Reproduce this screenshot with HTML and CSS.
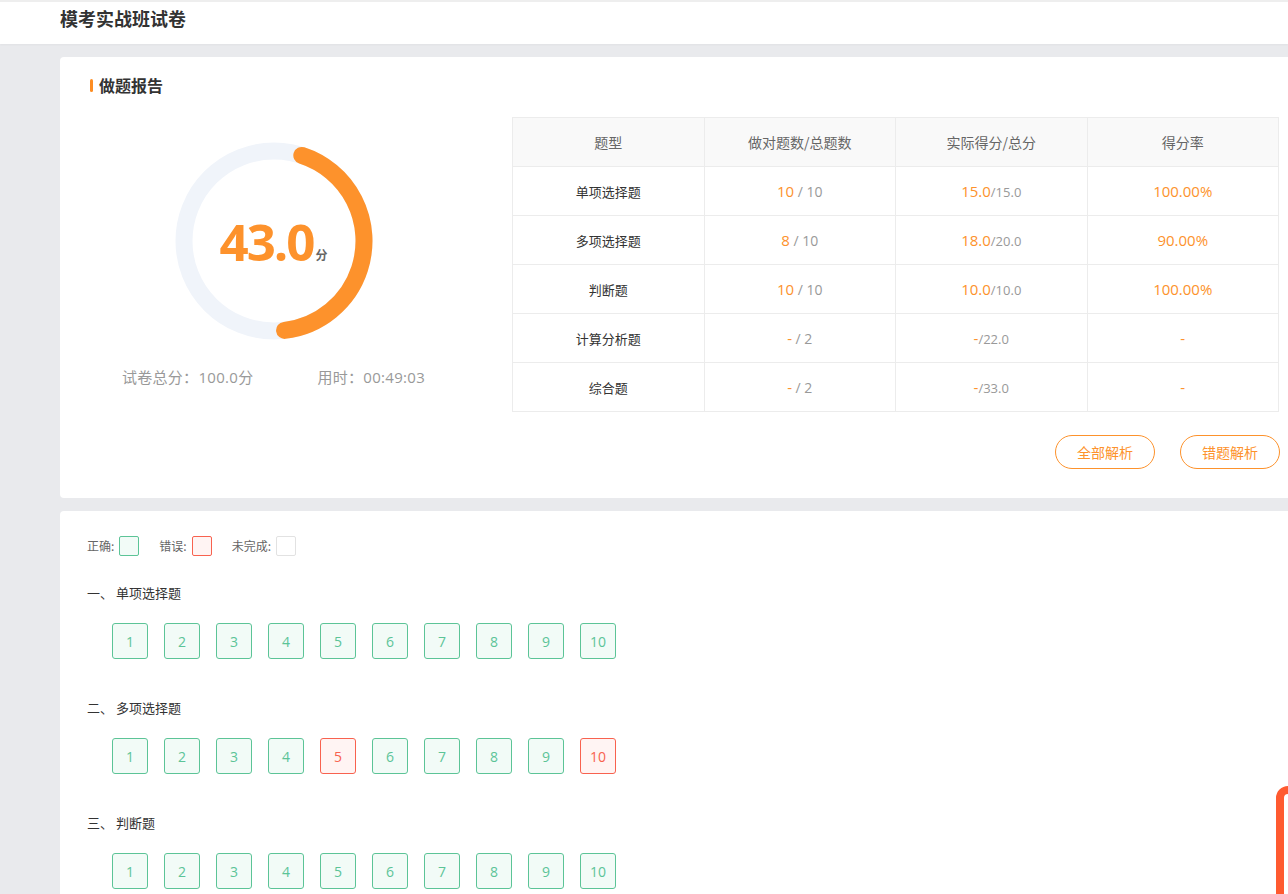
FILE: index.html
```html
<!DOCTYPE html>
<html lang="zh">
<head>
<meta charset="utf-8">
<title>模考实战班试卷</title>
<link rel="stylesheet" href="styles.css">
</head>
<body>
<header class="topbar">
  <h1 class="page-title">模考实战班试卷</h1>
</header>

<main class="content">
  <section class="card report">
    <h2 class="section-heading">做题报告</h2>
    <div class="report-body">
      <div class="score-col">
        <div class="gauge">
          <svg class="gauge-svg" width="200" height="200" viewBox="0 0 200 200">
            <circle cx="100" cy="100" r="90" fill="none" stroke="#f0f4fa" stroke-width="17"/>
            <circle cx="100" cy="100" r="90" fill="none" stroke="#fd922c" stroke-width="17" stroke-linecap="round" stroke-dasharray="243.4 565.5" transform="rotate(-72 100 100)"/>
          </svg>
          <div class="gauge-label"><span class="score-num">43.0</span><span class="score-unit">分</span></div>
        </div>
        <div class="score-meta">
          <span>试卷总分：100.0分</span>
          <span>用时：00:49:03</span>
        </div>
      </div>
      <div class="table-col">
        <table class="stat-table">
          <thead>
            <tr><th>题型</th><th>做对题数/总题数</th><th>实际得分/总分</th><th>得分率</th></tr>
          </thead>
          <tbody>
            <tr><td class="type">单项选择题</td><td><span class="hl">10</span><span class="mute"> / 10</span></td><td><span class="hl">15.0</span><span class="mute sm">/15.0</span></td><td><span class="hl">100.00%</span></td></tr>
            <tr><td class="type">多项选择题</td><td><span class="hl">8</span><span class="mute"> / 10</span></td><td><span class="hl">18.0</span><span class="mute sm">/20.0</span></td><td><span class="hl">90.00%</span></td></tr>
            <tr><td class="type">判断题</td><td><span class="hl">10</span><span class="mute"> / 10</span></td><td><span class="hl">10.0</span><span class="mute sm">/10.0</span></td><td><span class="hl">100.00%</span></td></tr>
            <tr><td class="type">计算分析题</td><td><span class="hl">-</span><span class="mute"> / 2</span></td><td><span class="hl">-</span><span class="mute sm">/22.0</span></td><td><span class="hl">-</span></td></tr>
            <tr><td class="type">综合题</td><td><span class="hl">-</span><span class="mute"> / 2</span></td><td><span class="hl">-</span><span class="mute sm">/33.0</span></td><td><span class="hl">-</span></td></tr>
          </tbody>
        </table>
        <div class="actions">
          <button class="btn-outline">全部解析</button>
          <button class="btn-outline">错题解析</button>
        </div>
      </div>
    </div>
  </section>

  <section class="card answers">
    <div class="legend">
      <span class="legend-item">正确:<i class="swatch ok"></i></span>
      <span class="legend-item">错误:<i class="swatch bad"></i></span>
      <span class="legend-item">未完成:<i class="swatch none"></i></span>
    </div>

    <div class="group">
      <div class="group-title">一、 单项选择题</div>
      <div class="qgrid">
        <span class="q ok">1</span><span class="q ok">2</span><span class="q ok">3</span><span class="q ok">4</span><span class="q ok">5</span><span class="q ok">6</span><span class="q ok">7</span><span class="q ok">8</span><span class="q ok">9</span><span class="q ok">10</span>
      </div>
    </div>

    <div class="group">
      <div class="group-title">二、 多项选择题</div>
      <div class="qgrid">
        <span class="q ok">1</span><span class="q ok">2</span><span class="q ok">3</span><span class="q ok">4</span><span class="q bad">5</span><span class="q ok">6</span><span class="q ok">7</span><span class="q ok">8</span><span class="q ok">9</span><span class="q bad">10</span>
      </div>
    </div>

    <div class="group">
      <div class="group-title">三、 判断题</div>
      <div class="qgrid">
        <span class="q ok">1</span><span class="q ok">2</span><span class="q ok">3</span><span class="q ok">4</span><span class="q ok">5</span><span class="q ok">6</span><span class="q ok">7</span><span class="q ok">8</span><span class="q ok">9</span><span class="q ok">10</span>
      </div>
    </div>
  </section>
</main>

<div class="float-widget"></div>
</body>
</html>
```

FILE: styles.css
```css
* { box-sizing: border-box; }
html, body { margin: 0; padding: 0; }
body {
  background: #e9eaed;
  font-family: "Open Sans", "Noto Sans CJK SC", sans-serif;
  color: #333;
  overflow: hidden;
  width: 1288px;
  height: 894px;
  position: relative;
}

.topbar {
  height: 44px;
  background: #fff;
  border-top: 2px solid #eeeeee;
  padding-left: 60px;
  box-shadow: 0 1px 2px rgba(0,0,0,0.04);
}
.page-title {
  margin: 0;
  font-family: "Noto Sans CJK SC", sans-serif;
  font-size: 18px;
  font-weight: 700;
  line-height: 32px;
  color: #333;
}

.content {
  margin-left: 60px;
  width: 1240px;
  padding-top: 13px;
}

.card {
  background: #fff;
  border-radius: 4px;
}
.report {
  padding: 17px 21px 29px 30px;
}
.section-heading {
  margin: 0;
  font-family: "Noto Sans CJK SC", sans-serif;
  font-size: 16px;
  font-weight: 700;
  line-height: 22px;
  color: #333;
  display: flex;
  align-items: center;
  gap: 6px;
}
.section-heading::before {
  content: "";
  width: 3px;
  height: 13px;
  border-radius: 2px;
  background: #fd8d22;
}

.report-body {
  display: flex;
  gap: 55px;
  margin-top: 21px;
}
.score-col {
  width: 367px;
  flex: none;
  padding-top: 24px;
  display: flex;
  flex-direction: column;
  align-items: center;
}
.gauge {
  position: relative;
  width: 200px;
  height: 200px;
}
.gauge-svg { display: block; }
.gauge-label {
  position: absolute;
  inset: 0;
  display: flex;
  align-items: center;
  justify-content: center;
  padding-left: 0;
}
.score-num {
  font-family: "Open Sans", sans-serif;
  font-size: 51px;
  font-weight: 700;
  color: #fd922c;
  letter-spacing: -2px;
  line-height: 1;
}
.score-unit {
  font-family: "Noto Sans CJK SC", sans-serif;
  font-size: 12px;
  font-weight: 700;
  color: #666;
  align-self: center;
  margin-top: 26px;
  margin-left: 2px;
}
.score-meta {
  margin-top: 26px;
  display: flex;
  gap: 64px;
  font-size: 15px;
  line-height: 20px;
  color: #999;
  letter-spacing: 0.3px;
}

.table-col {
  width: 767px;
  flex: none;
}
.stat-table {
  width: 767px;
  border-collapse: collapse;
  table-layout: fixed;
}
.stat-table th,
.stat-table td {
  border: 1px solid #ececec;
  height: 49px;
  padding: 0;
  text-align: center;
  vertical-align: middle;
}
.stat-table th {
  background: #f9f9f9;
  font-family: "Noto Sans CJK SC", sans-serif;
  font-weight: 400;
  font-size: 14px;
  color: #666;
}
.stat-table td.type {
  font-family: "Noto Sans CJK SC", sans-serif;
  font-size: 13px;
  color: #333;
}
.hl {
  color: #fd922c;
  font-size: 15px;
}
.mute {
  color: #999;
  font-size: 14px;
}
.mute.sm { font-size: 13px; }

.actions {
  display: flex;
  justify-content: flex-end;
  gap: 25px;
  margin-top: 23px;
  margin-right: -1px;
}
.btn-outline {
  width: 100px;
  height: 34px;
  border: 1px solid #fd922c;
  border-radius: 17px;
  background: #fff;
  color: #fd922c;
  font-family: "Noto Sans CJK SC", sans-serif;
  font-size: 14px;
  padding: 0;
}

.answers {
  margin-top: 13px;
  padding: 25px 27px 40px;
  min-height: 400px;
}
.legend {
  display: flex;
  gap: 20px;
  font-family: "Noto Sans CJK SC", sans-serif;
  font-size: 12px;
  color: #666;
  line-height: 20px;
}
.legend-item {
  display: flex;
  align-items: center;
  gap: 5px;
}
.swatch {
  display: block;
  width: 20px;
  height: 20px;
  border-radius: 2px;
  border: 1px solid #ddd;
}
.swatch.ok { border-color: #5cc497; background: #f2fbf7; }
.swatch.bad { border-color: #f8624f; background: #fff4f3; }
.swatch.none { border-color: #e2e2e2; background: #fff; }

.group { margin-top: 27px; }
.group + .group { margin-top: 39px; }
.group-title {
  font-family: "Noto Sans CJK SC", sans-serif;
  font-size: 13px;
  line-height: 20px;
  color: #333;
}
.qgrid {
  display: flex;
  gap: 16px;
  margin-top: 20px;
  padding-left: 25px;
}
.q {
  width: 36px;
  height: 36px;
  border-radius: 3px;
  border: 1px solid #5cc497;
  background: #f2fbf7;
  color: #5cc497;
  font-size: 14px;
  display: flex;
  align-items: center;
  justify-content: center;
}
.q.bad {
  border-color: #f8624f;
  background: #fff4f3;
  color: #f8624f;
}

.float-widget {
  position: absolute;
  left: 1276px;
  top: 786px;
  width: 60px;
  height: 200px;
  border: 8px solid #ff5a30;
  border-radius: 12px;
  background: #fff;
}
```
